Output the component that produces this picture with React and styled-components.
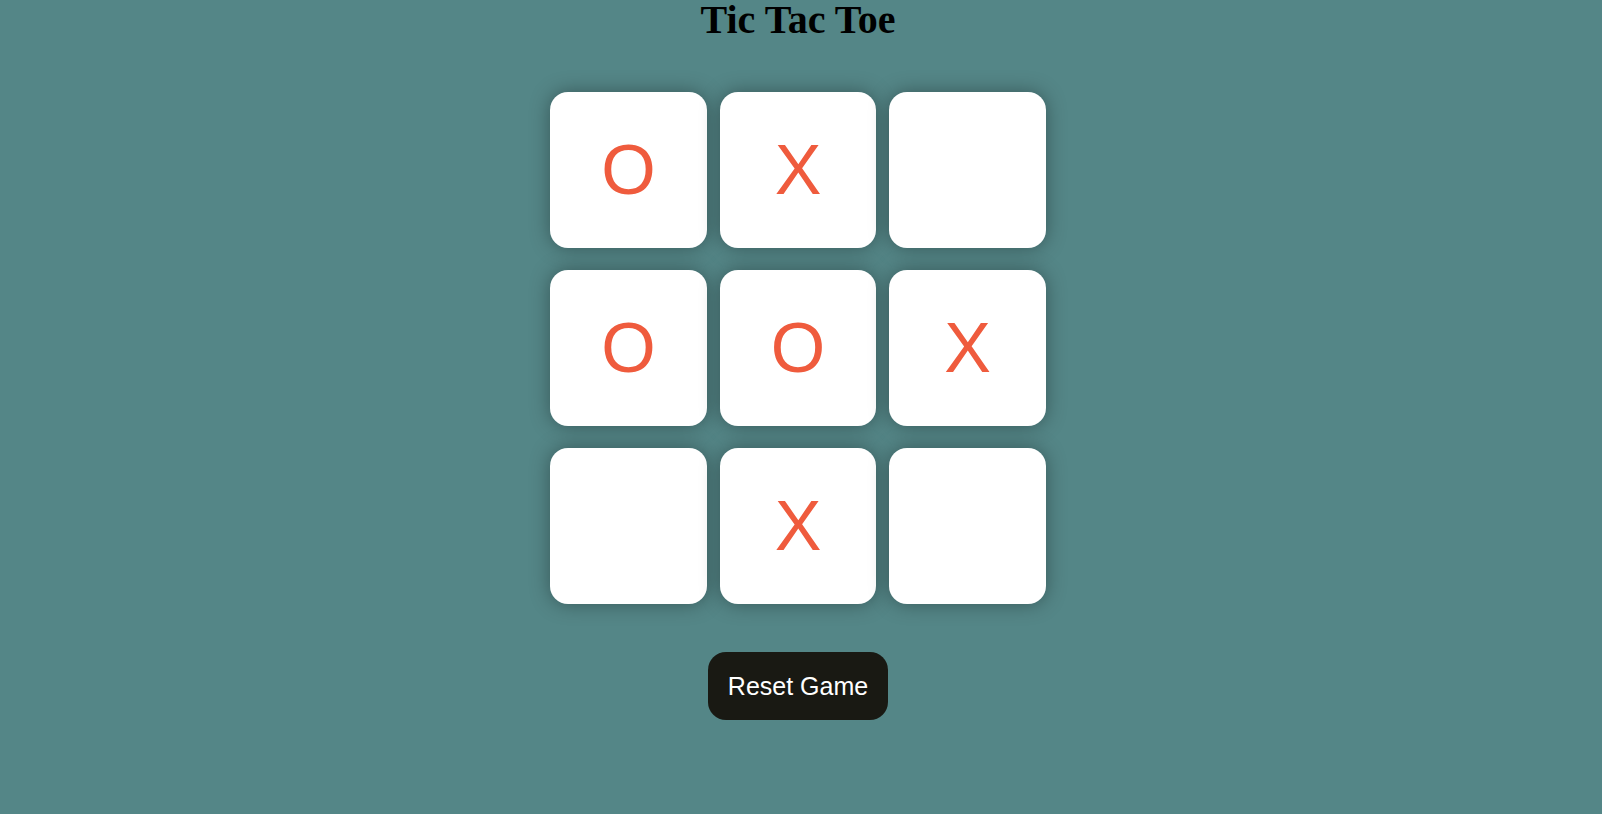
import React, { useState } from 'react'
import styled, { createGlobalStyle } from 'styled-components'

const GlobalStyle = createGlobalStyle`
  body {
    margin: 0;
    background: #548687;
    font-family: "Liberation Sans", Arial, sans-serif;
  }
`

const Main = styled.main`
  display: flex;
  flex-direction: column;
  align-items: center;
  padding-right: 6px;
  min-height: 100vh;
`

const Title = styled.h1`
  margin: 0;
  font-family: "Liberation Serif", "Times New Roman", serif;
  font-size: 40px;
  line-height: 1;
  font-weight: bold;
  color: #000;
`

const Board = styled.div`
  display: grid;
  grid-template-columns: 157px 156px 157px;
  grid-auto-rows: 156px;
  column-gap: 13px;
  row-gap: 22px;
  margin-top: 52px;
`

const Cell = styled.button`
  border: none;
  border-radius: 18px;
  background: #fff;
  box-shadow: 0 0 20px rgba(0, 0, 0, 0.35);
  font-family: "Liberation Sans", Arial, sans-serif;
  font-size: 70px;
  color: #ef5b3d;
  padding: 0;
  cursor: pointer;
`

const ResetButton = styled.button`
  margin-top: 48px;
  width: 180px;
  height: 68px;
  border: none;
  border-radius: 18px;
  background: #191913;
  color: #fff;
  font-family: "Liberation Sans", Arial, sans-serif;
  font-size: 25px;
  cursor: pointer;
`

const start = ['O', 'X', '', 'O', 'O', 'X', '', 'X', '']

export default function App() {
  const [cells, setCells] = useState(start)

  return (
    <Main>
      <GlobalStyle />
      <Title>Tic Tac Toe</Title>
      <Board>
        {cells.map((c, i) => (
          <Cell key={i}>{c}</Cell>
        ))}
      </Board>
      <ResetButton onClick={() => setCells(Array(9).fill(''))}>
        Reset Game
      </ResetButton>
    </Main>
  )
}
